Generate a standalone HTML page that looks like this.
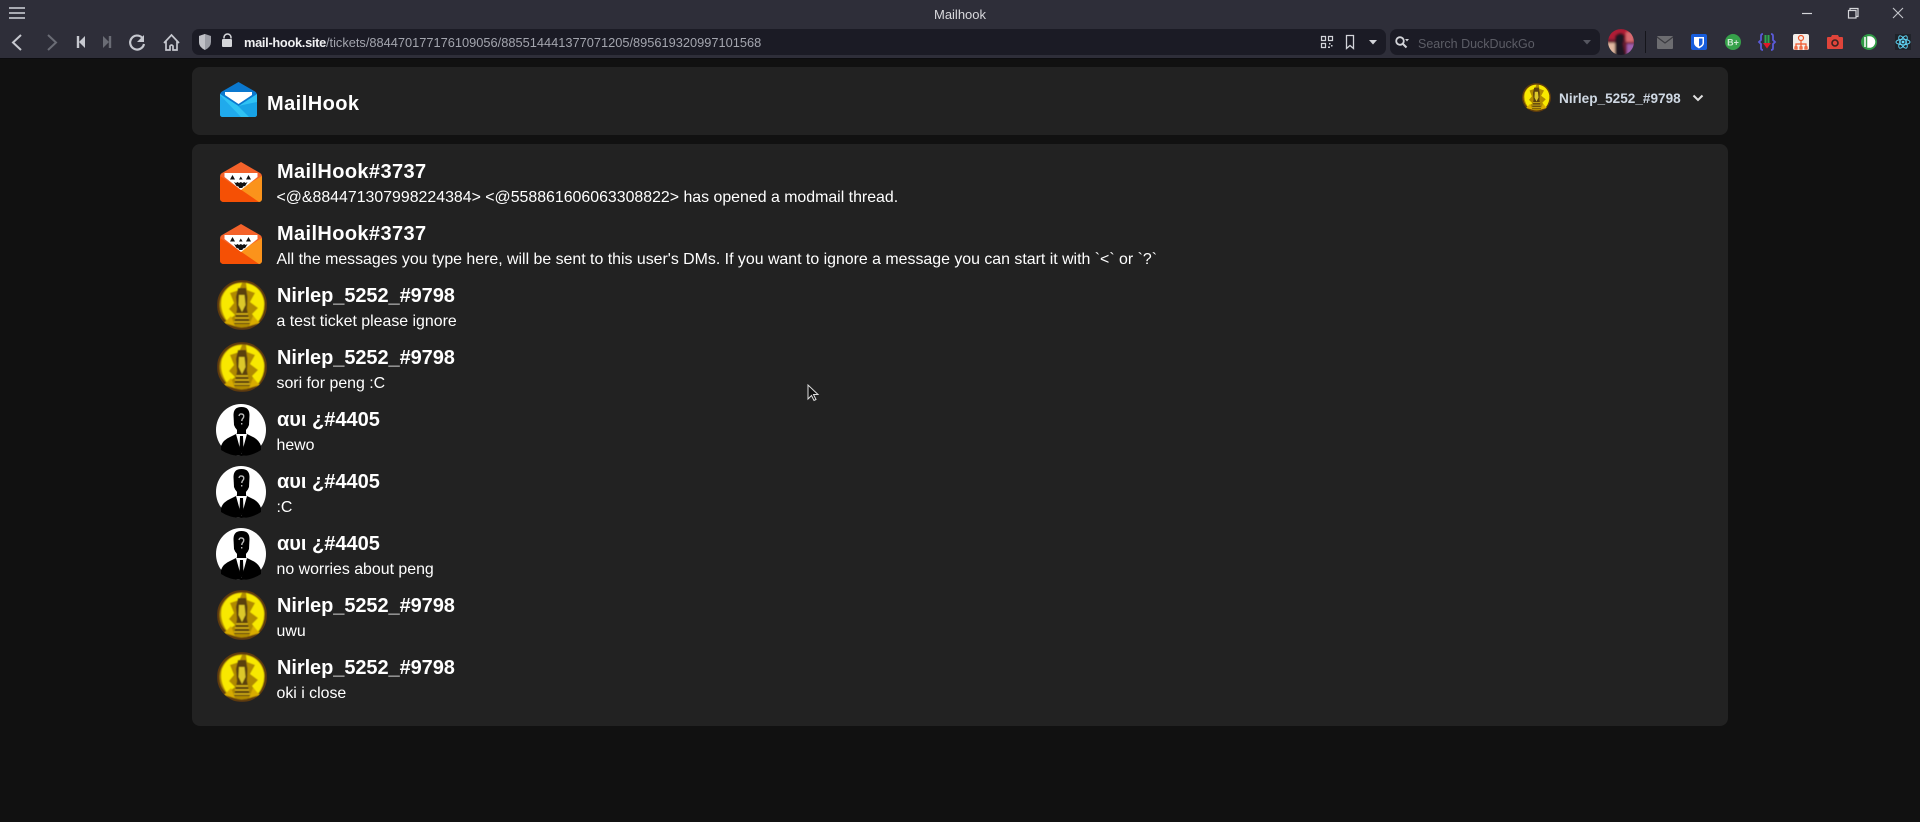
<!DOCTYPE html>
<html lang="en"><head><meta charset="utf-8"><title>Mailhook</title>
<style>
html,body{margin:0;padding:0;width:1920px;height:822px;overflow:hidden;background:#111111;font-family:"Liberation Sans",sans-serif}
.a{position:absolute;white-space:nowrap}
#chrome{position:absolute;left:0;top:0;width:1920px;height:58px;background:#2e2e39;border-bottom:1px solid #0c0c0f}
.bar{position:absolute;top:29px;height:26px;background:#1b1b25;border-radius:7px}
.card{position:absolute;left:192px;width:1536px;background:#222222;border-radius:8px}
.t{position:absolute;left:277px;color:#fff;font-weight:bold;font-size:20px;line-height:24px;white-space:nowrap}
.h{letter-spacing:.38px}
.n{letter-spacing:-.07px}
.m{position:absolute;left:276.5px;color:#fff;font-size:15.9px;line-height:20px;white-space:nowrap}
svg{position:absolute;overflow:visible}
</style></head><body>
<svg width="0" height="0" style="position:absolute"><defs>
<filter id="soft" x="-5%" y="-5%" width="110%" height="110%"><feGaussianBlur stdDeviation=".6"/></filter>
<clipPath id="gc"><circle cx="25" cy="25" r="25"/></clipPath>
<symbol id="orange" viewBox="0 0 42 40">
<path d="M21 0 L40 11 Q42 12 42 15 V36 Q42 40 38 40 H4 Q0 40 0 36 V15 Q0 12 2 11Z" fill="#f4622a"/>
<path d="M0 14 L21 28 L42 14 V36 Q42 40 38 40 H4 Q0 40 0 36Z" fill="#f55005"/>
<path d="M42 14 V36 Q42 40 39 40 L20 27Z" fill="#fb931b"/>
<path d="M4.500 11 H37.500 V15 L21 28 L4.500 15Z" fill="#fff"/>
<path d="M12.500 13l2.500 4.500h-5zM28.500 13l2.500 4.500h-5zM20.800 14.500l1.800 3h-3.600z" fill="#111"/>
<path d="M14 20l2 1 1.500-1 1.500 1 1.800-1 1.800 1 1.500-1 1.500 1 2-1-2.500 4-2 .5-.8 1.500h-3l-.8-1.500-2-.5z" fill="#111"/>
</symbol>
<symbol id="gold" viewBox="0 0 50 50">
<g clip-path="url(#gc)"><g filter="url(#soft)">
<rect width="50" height="50" fill="#5e3b08"/>
<circle cx="25" cy="25" r="22.500" fill="#b08a06"/>
<path d="M5 17 Q11 3 25 3 L22 10 L13 13 L17 23 L12 29 L18 35 L10 41 Q2 29 5 17Z" fill="#f8e800"/>
<path d="M29 3 Q44 6 47 21 Q48 33 41 42 L35 34 L41 28 L33 22 L38 13 L30 10Z" fill="#f8e800"/>
<path d="M21 8h8l1.500 9-.5 12 3 15H17l3-15-1-12z" fill="#5a4009"/>
<path d="M22 15h5.500l1 10-3.500 7-3.500-7z" fill="#dcc82c"/>
<path d="M19 34h12M18 38h14M17 42h16" stroke="#e0bc14" stroke-width="1.500"/>
<path d="M7 43l7-7 4 10zM43 43l-7-7-4 10z" fill="#d8ac05"/>
</g></g>
</symbol>
<symbol id="man" viewBox="0 0 50 52">
<ellipse cx="25" cy="26" rx="25" ry="26" fill="#fff"/>
<path d="M17.500 11 Q17.500 3 25.500 3 Q33.500 3 33.500 11 L33 21 Q31 27 25.500 28 Q20 27 18 21Z" fill="#000"/>
<path d="M21 26h9v6h-9z" fill="#000"/>
<path d="M5 42 Q7 36 14 33 L21 29.500 H30 L37 33 Q43 36 45 42 L45 46 Q36 52 25 52 Q14 52 5 46Z" fill="#000"/>
<path d="M20 30 L25.500 50 L31 30Z" fill="#fff"/>
<path d="M24 32 H27 L27.500 45 L25.500 50 L23.500 45Z" fill="#000"/>
<path d="M23 12 Q23.500 9.500 25.700 10 Q28.500 10.500 27.500 13.500 Q26 15 25.700 17 M25.700 19v1.500" fill="none" stroke="#bbb" stroke-width="1.400"/>
</symbol>
</defs></svg>

<div id="chrome"></div>
<div class="a" style="left:860px;width:200px;top:7px;text-align:center;color:#d8d8dc;font-size:13px;line-height:16px">Mailhook</div>

<svg style="left:0;top:0" width="240" height="58" fill="none" stroke="#c6c8cf" stroke-width="2">
<path d="M9 8h16M9 13h16M9 18h16" stroke="#a9abb3"/>
<path d="M21 35l-8 7.500 8 7.500"/>
<path d="M48 35l8 7.500-8 7.500" stroke="#6a6c75"/>
<path d="M78 36v12" stroke-width="2.400"/><path d="M85 36v12l-6-6z" fill="#c6c8cf" stroke="none"/>
<path d="M110 36v12" stroke="#6a6c75" stroke-width="2.400"/><path d="M103 36v12l6-6z" fill="#6a6c75" stroke="none"/>
<path d="M142 37.500 A7 7 0 1 0 144 44" stroke-width="2.200"/><path d="M144 35v7h-7z" fill="#c6c8cf" stroke="none"/>
<path d="M164 43l7.500-8 7.500 8M166 41v9h4v-4q1.500-2 3 0v4h4v-9" stroke-width="1.700"/>
</svg>

<div class="bar" style="left:192px;width:1194px"></div>
<div class="bar" style="left:1390px;width:210px"></div>
<svg style="left:0;top:0" width="1920" height="58">
<path d="M205 34l6 2v6q0 5-6 8q-6-3-6-8v-6z" fill="#9c9ea6"/>
<path d="M205 34v16q-6-3-6-8v-6z" fill="#c0c1c7"/>
<path d="M224 38.500v-1a3.500 3.500 0 017 0v1" fill="none" stroke="#d5d6da" stroke-width="1.500"/><rect x="222" y="39" width="10" height="8" rx="1" fill="#d5d6da"/>
<g fill="none" stroke="#d3d4d9" stroke-width="1.200"><path d="M1321.500 36.500h4v4h-4zM1328.500 36.500h4v4h-4zM1321.500 43.500h4v4h-4z"/></g>
<path d="M1329 43h1.500v1.500H1329zM1331 45h1.500v1.500H1331zM1328 46.500h2V48h-2z" fill="#d3d4d9"/>
<path d="M1346.500 35.500h7v13l-3.500-3-3.500 3z" fill="none" stroke="#d3d4d9" stroke-width="1.300"/>
<path d="M1369 40h8l-4 4.500z" fill="#d3d4d9"/>
<circle cx="1400" cy="41" r="3.800" fill="none" stroke="#d3d4d9" stroke-width="1.800"/><path d="M1403 44l3.500 3.500" stroke="#d3d4d9" stroke-width="2"/><path d="M1405 39h4l-2 2.500z" fill="#d3d4d9"/>
<path d="M1583 40h8l-4 4.500z" fill="#555660"/>
<defs><clipPath id="cp"><circle cx="1621" cy="42" r="13"/></clipPath><filter id="s2"><feGaussianBlur stdDeviation="1"/></filter></defs>
<g clip-path="url(#cp)"><g filter="url(#s2)"><rect x="1606" y="27" width="30" height="30" fill="#6d1f30"/><rect x="1608" y="29" width="26" height="10" fill="#b01c35"/><rect x="1606" y="43" width="9" height="14" fill="#e0b8a0"/><rect x="1627" y="44" width="8" height="12" fill="#a060b0"/><path d="M1615 36q6-6 10 0l-2 8 3 13h-11z" fill="#1a1420"/><path d="M1626 32h8v10h-8z" fill="#d86a70"/></g></g>
<path d="M1645.500 31v22" stroke="#15151b"/>
<rect x="1657" y="36" width="16" height="13" rx="1" fill="#6c6c70"/><path d="M1657 37l8 6 8-6" fill="none" stroke="#3a3a40" stroke-width="1.200"/>
<rect x="1691" y="34" width="16" height="16" rx="2" fill="#175ddc"/><path d="M1694 37h10v6q0 3-5 5.500q-5-2.500-5-5.500z" fill="#fff"/><path d="M1699 38.500h3.500v4.500q0 2-3.500 3.500z" fill="#175ddc"/>
<circle cx="1733" cy="42" r="8" fill="#36a14a"/><text x="1733" y="45.500" font-size="9" font-weight="bold" fill="#cfe8d4" text-anchor="middle" font-family="Liberation Sans">B+</text>
<path d="M1763 34q-2 0-2 2v4l-2 2 2 2v4q0 2 2 2M1771 34q2 0 2 2v4l2 2-2 2v4q0 2-2 2" fill="none" stroke="#5a5ad8" stroke-width="1.800"/><path d="M1764.500 35h2v8h-2zM1767.500 35h2v8h-2z" fill="#2fa84f"/><path d="M1763 43h8l-4 5.500z" fill="#e01828"/>
<rect x="1793" y="34" width="16" height="16" rx="2" fill="#f2eeea"/><g fill="none" stroke="#f0562a" stroke-width="1.200"><circle cx="1801" cy="38" r="2.500"/><path d="M1801 40.500v3M1796 47v-3h10v3M1801 44v3"/><path d="M1795 47h2v2h-2zM1800 47h2v2h-2zM1805 47h2v2h-2z"/></g>
<path d="M1828 37h3l1-2h6l1 2h3q1 0 1 1v10q0 1-1 1h-14q-1 0-1-1V38q0-1 1-1z" fill="#e0443a"/><circle cx="1835" cy="43" r="3" fill="none" stroke="#3b2220" stroke-width="1.600"/>
<circle cx="1869" cy="42" r="8" fill="#2f9a45"/><path d="M1865 37v10M1868 37h1.500a5 5 0 010 10H1868z" fill="#fff" stroke="#fff" stroke-width="1.500"/>
<rect x="1895" y="34" width="16" height="16" fill="#20232a"/><g fill="none" stroke="#61dafb" stroke-width=".9"><ellipse cx="1903" cy="42" rx="7" ry="2.800"/><ellipse cx="1903" cy="42" rx="7" ry="2.800" transform="rotate(60 1903 42)"/><ellipse cx="1903" cy="42" rx="7" ry="2.800" transform="rotate(120 1903 42)"/></g><circle cx="1903" cy="42" r="1.400" fill="#61dafb"/>
<path d="M1802 13.500h10" stroke="#d5d6da" stroke-width="1.200"/>
<path d="M1850 10v-1.500h8v8h-2" fill="none" stroke="#d5d6da" stroke-width="1.200"/><rect x="1848.500" y="10.500" width="7.500" height="7.500" fill="none" stroke="#d5d6da" stroke-width="1.200"/>
<path d="M1893 8l10 10M1903 8l-10 10" stroke="#c5c6cc" stroke-width="1.100"/>
</svg>
<div class="a" style="left:244px;top:35px;font-size:12.82px;line-height:16px;color:#a3a5ae"><span style="color:#f0f0f2;font-weight:bold;letter-spacing:-.3px">mail-hook.site</span>/tickets/884470177176109056/885514441377071205/895619320997101568</div>
<div class="a" style="left:1418px;top:36px;font-size:12.5px;line-height:16px;color:#5c5d66">Search DuckDuckGo</div>

<div class="card" style="top:67px;height:68px"></div>
<svg style="left:220px;top:82px" width="37" height="35" viewBox="0 0 37 35">
<path d="M18.500 0L35 9.500Q37 11 37 13V32Q37 35 34 35H3Q0 35 0 32V13Q0 11 2 9.500Z" fill="#0a78cf"/>
<path d="M0 12L18.500 24L37 12V32Q37 35 34 35H3Q0 35 0 32Z" fill="#2fc2f4"/>
<path d="M37 20V32Q37 35 34 35H29L18 24Z" fill="#18a3e6"/><path d="M0 13L21 35H3Q0 35 0 32Z" fill="#1a9fe8" opacity=".7"/>
<path d="M5 10H32V13L18.500 22L5 13Z" fill="#fff"/>
</svg>
<div class="a" style="left:267px;top:92px;color:#fff;font-weight:bold;font-size:20px;line-height:24px;letter-spacing:.45px">MailHook</div>
<svg style="left:1522px;top:83px" width="29" height="29"><use href="#gold" width="29" height="29"/></svg>
<div class="a" style="left:1559px;top:91px;color:#cfd8e3;font-weight:bold;font-size:13.6px;line-height:16px">Nirlep_5252_#9798</div>
<svg style="left:1692px;top:94px" width="12" height="8"><path d="M1.500 1.500L6 6L10.500 1.500" fill="none" stroke="#e0e0e0" stroke-width="2"/></svg>

<div class="card" style="top:144px;height:582px"></div>

<svg style="left:220px;top:162px" width="42" height="40"><use href="#orange" width="42" height="40"/></svg>
<div class="t h" style="top:160px">MailHook#3737</div>
<div class="m" style="top:188px">&lt;@&amp;884471307998224384&gt; &lt;@558861606063308822&gt; has opened a modmail thread.</div>

<svg style="left:220px;top:224px" width="42" height="40"><use href="#orange" width="42" height="40"/></svg>
<div class="t h" style="top:222px">MailHook#3737</div>
<div class="m" style="top:250px">All the messages you type here, will be sent to this user's DMs. If you want to ignore a message you can start it with `&lt;` or `?`</div>

<svg style="left:217px;top:280px" width="50" height="50"><use href="#gold" width="50" height="50"/></svg>
<div class="t n" style="top:284px">Nirlep_5252_#9798</div>
<div class="m" style="top:312px">a test ticket please ignore</div>

<svg style="left:217px;top:342px" width="50" height="50"><use href="#gold" width="50" height="50"/></svg>
<div class="t n" style="top:346px">Nirlep_5252_#9798</div>
<div class="m" style="top:374px">sori for peng :C</div>

<svg style="left:216px;top:404px" width="50" height="52"><use href="#man" width="50" height="52"/></svg>
<div class="t" style="top:408px">αυι ¿#4405</div>
<div class="m" style="top:436px">hewo</div>

<svg style="left:216px;top:466px" width="50" height="52"><use href="#man" width="50" height="52"/></svg>
<div class="t" style="top:470px">αυι ¿#4405</div>
<div class="m" style="top:498px">:C</div>

<svg style="left:216px;top:528px" width="50" height="52"><use href="#man" width="50" height="52"/></svg>
<div class="t" style="top:532px">αυι ¿#4405</div>
<div class="m" style="top:560px">no worries about peng</div>

<svg style="left:217px;top:590px" width="50" height="50"><use href="#gold" width="50" height="50"/></svg>
<div class="t n" style="top:594px">Nirlep_5252_#9798</div>
<div class="m" style="top:622px">uwu</div>

<svg style="left:217px;top:652px" width="50" height="50"><use href="#gold" width="50" height="50"/></svg>
<div class="t n" style="top:656px">Nirlep_5252_#9798</div>
<div class="m" style="top:684px">oki i close</div>

<svg style="left:807px;top:384px" width="12" height="18"><path d="M1 1v14l3.500-3.500 2.500 5 2-1-2.500-5H11z" fill="#111" stroke="#ddd" stroke-width="1"/></svg>
</body></html>
